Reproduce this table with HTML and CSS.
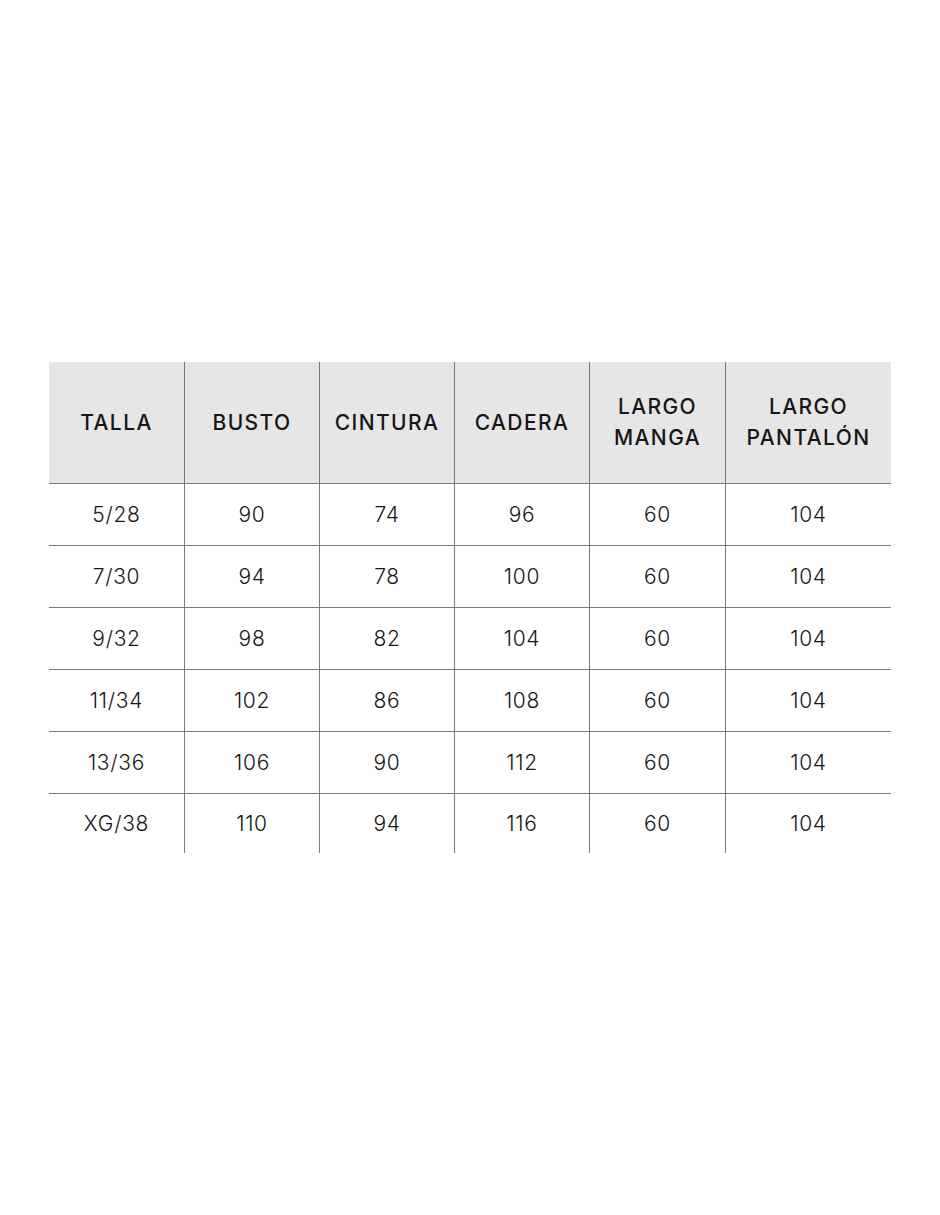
FILE: index.html
```html
<!DOCTYPE html>
<html lang="es">
<head>
<meta charset="utf-8">
<title>Tabla de tallas</title>
<link rel="stylesheet" href="styles.css">
</head>
<body>
<div class="sizes">
  <div class="cell head">TALLA</div>
  <div class="cell head">BUSTO</div>
  <div class="cell head">CINTURA</div>
  <div class="cell head">CADERA</div>
  <div class="cell head">LARGO<br>MANGA</div>
  <div class="cell head">LARGO<br>PANTALÓN</div>

  <div class="cell">5/28</div><div class="cell">90</div><div class="cell">74</div><div class="cell">96</div><div class="cell">60</div><div class="cell">104</div>
  <div class="cell">7/30</div><div class="cell">94</div><div class="cell">78</div><div class="cell">100</div><div class="cell">60</div><div class="cell">104</div>
  <div class="cell">9/32</div><div class="cell">98</div><div class="cell">82</div><div class="cell">104</div><div class="cell">60</div><div class="cell">104</div>
  <div class="cell">11/34</div><div class="cell">102</div><div class="cell">86</div><div class="cell">108</div><div class="cell">60</div><div class="cell">104</div>
  <div class="cell">13/36</div><div class="cell">106</div><div class="cell">90</div><div class="cell">112</div><div class="cell">60</div><div class="cell">104</div>
  <div class="cell">XG/38</div><div class="cell">110</div><div class="cell">94</div><div class="cell">116</div><div class="cell">60</div><div class="cell">104</div>
</div>
</body>
</html>
```
FILE: styles.css
```css
html, body {
  margin: 0;
  padding: 0;
  background: #ffffff;
}

body {
  font-family: Inter, "DejaVu Sans", sans-serif;
  color: #161616;
}

.sizes {
  display: grid;
  grid-template-columns: 135px 135px 135px 135px 136px 166px;
  grid-template-rows: 121px 62px 62px 62px 62px 62px 60px;
  margin: 362px 0 0 49px;
  width: 842px;
}

.cell {
  box-sizing: border-box;
  display: flex;
  align-items: center;
  justify-content: center;
  text-align: center;
  font-size: 21px;
  font-weight: 330;
  letter-spacing: 0.7px;
  line-height: 31px;
  border-top: 1px solid #7a7a7a;
  border-left: 1px solid #7a7a7a;
}

.cell:nth-child(6n+1) {
  border-left: none;
}

.head {
  background: #e6e6e6;
  border-top: none;
  font-weight: 460;
  letter-spacing: 1.4px;
  padding-bottom: 1px;
}
```
